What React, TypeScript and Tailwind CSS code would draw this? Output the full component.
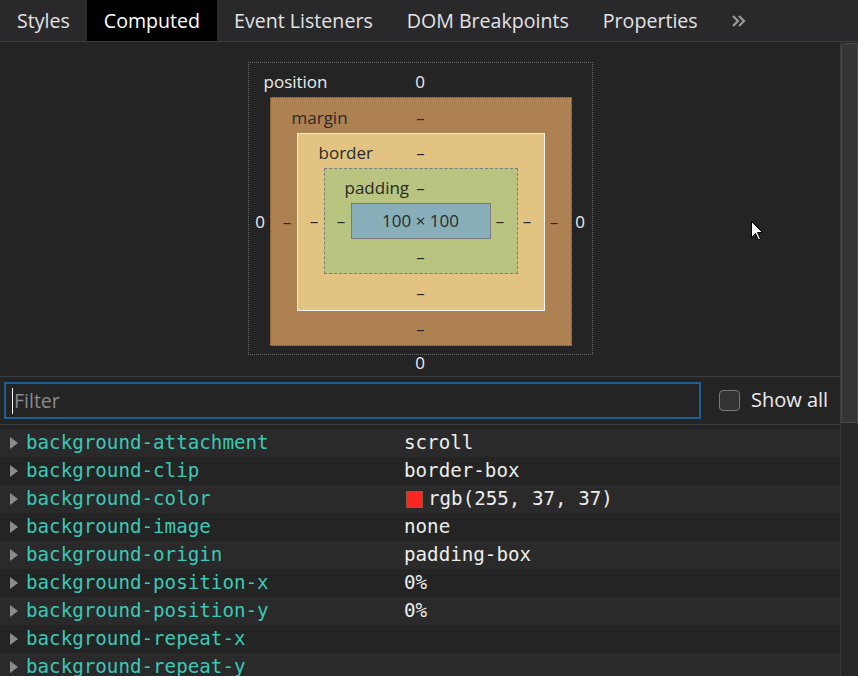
import type { ReactNode } from 'react';

const tabs = ['Styles', 'Computed', 'Event Listeners', 'DOM Breakpoints', 'Properties'];

const rows: { name: string; value: string; swatch?: string }[] = [
    { name: 'background-attachment', value: 'scroll' },
    { name: 'background-clip', value: 'border-box' },
    { name: 'background-color', value: 'rgb(255, 37, 37)', swatch: '#ff2525' },
    { name: 'background-image', value: 'none' },
    { name: 'background-origin', value: 'padding-box' },
    { name: 'background-position-x', value: '0%' },
    { name: 'background-position-y', value: '0%' },
    { name: 'background-repeat-x', value: '' },
    { name: 'background-repeat-y', value: '' },
];

interface BoxProps {
    className: string;
    label: string;
    labelClass: string;
    value: string;
    leftClass: string;
    rightClass: string;
    showBottom?: boolean;
    children: ReactNode;
}

function Box({ className, label, labelClass, value, leftClass, rightClass, showBottom = true, children }: BoxProps) {
    return (
        <div className={`grid ${className}`}>
            {/* top row: label + centered value */}
            <div className="col-span-3 grid grid-cols-[1fr_auto_1fr] items-center pt-[4px]">
                <span className={`justify-self-start ${labelClass}`}>{label}</span>
                <span>{value}</span>
                <span />
            </div>
            <div className={`flex items-center justify-center ${leftClass}`}>{value}</div>
            {children}
            <div className={`flex items-center justify-center ${rightClass}`}>{value}</div>
            <div className="col-span-3 flex items-center justify-center pt-[1px]">{showBottom ? value : null}</div>
        </div>
    );
}

function BoxModel() {
    return (
        <div className="flex h-[334px] shrink-0 flex-col items-center pt-[20px] text-[17px] leading-[20px]">
            <Box
                className="w-[345px] h-[293px] grid-cols-[21px_auto_20px] grid-rows-[34px_auto_8px] border border-dotted border-[#6a6a6a] text-[#ececec]"
                label="position"
                labelClass="pl-[15px]"
                value="0"
                leftClass="pl-[2px]"
                rightClass="pr-[3px]"
                showBottom={false}
            >
                <Box
                    className="w-[302px] h-[249px] grid-cols-[26px_auto_26px] grid-rows-[35px_auto_34px] border border-dotted border-[#6b4f32] bg-[#ae8152] text-[#2a2a2a]"
                    label="margin"
                    labelClass="pl-[21px]"
                    value="–"
                    leftClass="pl-[7px]"
                    rightClass="pr-[7px]"
                >
                    <Box
                        className="w-[248px] h-[178px] grid-cols-[26px_auto_26px] grid-rows-[34px_auto_36px] border border-solid border-[#f2f2f2] bg-[#e2c381] text-[#2a2a2a]"
                        label="border"
                        labelClass="pl-[21px]"
                        value="–"
                        leftClass="pl-[7px]"
                        rightClass="pr-[7px]"
                    >
                        <Box
                            className="w-[194px] h-[106px] grid-cols-[26px_auto_26px] grid-rows-[34px_auto_34px] border border-dashed border-[#7c7c7c] bg-[#b8c480] text-[#2a2a2a]"
                            label="padding"
                            labelClass="pl-[20px]"
                            value="–"
                            leftClass="pl-[7px]"
                            rightClass="pr-[7px]"
                        >
                            <div className="flex h-[36px] w-[140px] items-center justify-center border border-[#7a7a7a] bg-[#88afb9] text-[#2a2a2a]">
                                100 × 100
                            </div>
                        </Box>
                    </Box>
                </Box>
            </Box>
            <div className="mt-[-2px] h-[20px] text-[#ececec]">0</div>
        </div>
    );
}

export default function App() {
    return (
        <div
            className="relative flex h-[676px] w-[858px] flex-col overflow-hidden bg-[#242424] text-[#e6e6e6]"
            style={{ fontFamily: '"Open Sans", "Noto Sans", sans-serif' }}
        >
            {/* Tab bar */}
            <div className="flex h-[42px] shrink-0 items-stretch border-b border-[#3c3c3c] bg-[#29292c] text-[19.6px]">
                {tabs.map((tab) => (
                    <div
                        key={tab}
                        className={`flex items-center px-[17px] ${tab === 'Computed' ? 'bg-black text-white' : 'text-[#e3e3e3]'}`}
                    >
                        {tab}
                    </div>
                ))}
                <div className="flex items-center pl-[16px]">
                    <svg width="16" height="14" viewBox="0 0 16 14" fill="none" stroke="#9a9a9a" strokeWidth="2.2">
                        <path d="M2 2l5 5-5 5M8 2l5 5-5 5" />
                    </svg>
                </div>
            </div>

            <div className="flex min-h-0 flex-1">
                {/* Main content */}
                <div className="flex w-[840px] flex-col">
                    <BoxModel />

                    {/* Filter row */}
                    <div className="flex h-[49px] shrink-0 items-start border-y border-[#3e3e3e] pt-[5px]">
                        <div className="ml-[4px] flex h-[37px] w-[697px] items-center border-2 border-[#1b5d95] bg-[#242424] pl-[6px] text-[19.5px] text-[#8a8a8a]">
                            <span className="mr-[1px] h-[26px] w-[1px] bg-white" />
                            Filter
                        </div>
                        <div className="ml-[18px] mt-[8px] h-[21px] w-[21px] rounded-[4px] border border-[#7a7a7a] bg-[#333]" />
                        <span className="ml-[11px] mt-[5px] text-[20px] leading-[26px] text-[#ececec]">Show all</span>
                    </div>

                    {/* Computed properties */}
                    <div className="pt-[4px]" style={{ fontFamily: '"DejaVu Sans Mono", "Liberation Mono", monospace' }}>
                        {rows.map((r, i) => (
                            <div
                                key={r.name}
                                className={`flex h-[28px] items-center text-[19.2px] ${i % 2 === 0 ? 'bg-[#2a2a2a]' : 'bg-[#242424]'}`}
                            >
                                <svg className="ml-[10px] mr-[8px] shrink-0" width="8" height="12" viewBox="0 0 8 12">
                                    <path d="M0 0L8 6L0 12Z" fill="#8c8c8c" />
                                </svg>
                                <span className="w-[378px] shrink-0 text-[#3cc8b6]">{r.name}</span>
                                <span className="flex items-center text-[#ededed]">
                                    {r.swatch && (
                                        <span
                                            className="mr-[5px] ml-[2px] inline-block h-[17px] w-[17px] border border-[#8b5a3c]"
                                            style={{ backgroundColor: r.swatch }}
                                        />
                                    )}
                                    {r.value}
                                </span>
                            </div>
                        ))}
                    </div>
                </div>

                {/* Scrollbar */}
                <div className="flex w-[18px] flex-col border-l border-[#3a3a3a] bg-[#262626]">
                    <div className="mt-[1px] h-[380px] rounded-tl-[4px] border border-[#4a4a4a] bg-[#343434]" />
                </div>
            </div>

            {/* Mouse pointer */}
            <svg className="absolute left-[751px] top-[221px]" width="13" height="20" viewBox="0 0 13 20">
                <path d="M0.5 0.5V16.5L4.5 12.5L7.5 19L9.5 18L6.5 11.5H11.5Z" fill="white" stroke="black" strokeWidth="1" />
            </svg>
        </div>
    );
}
